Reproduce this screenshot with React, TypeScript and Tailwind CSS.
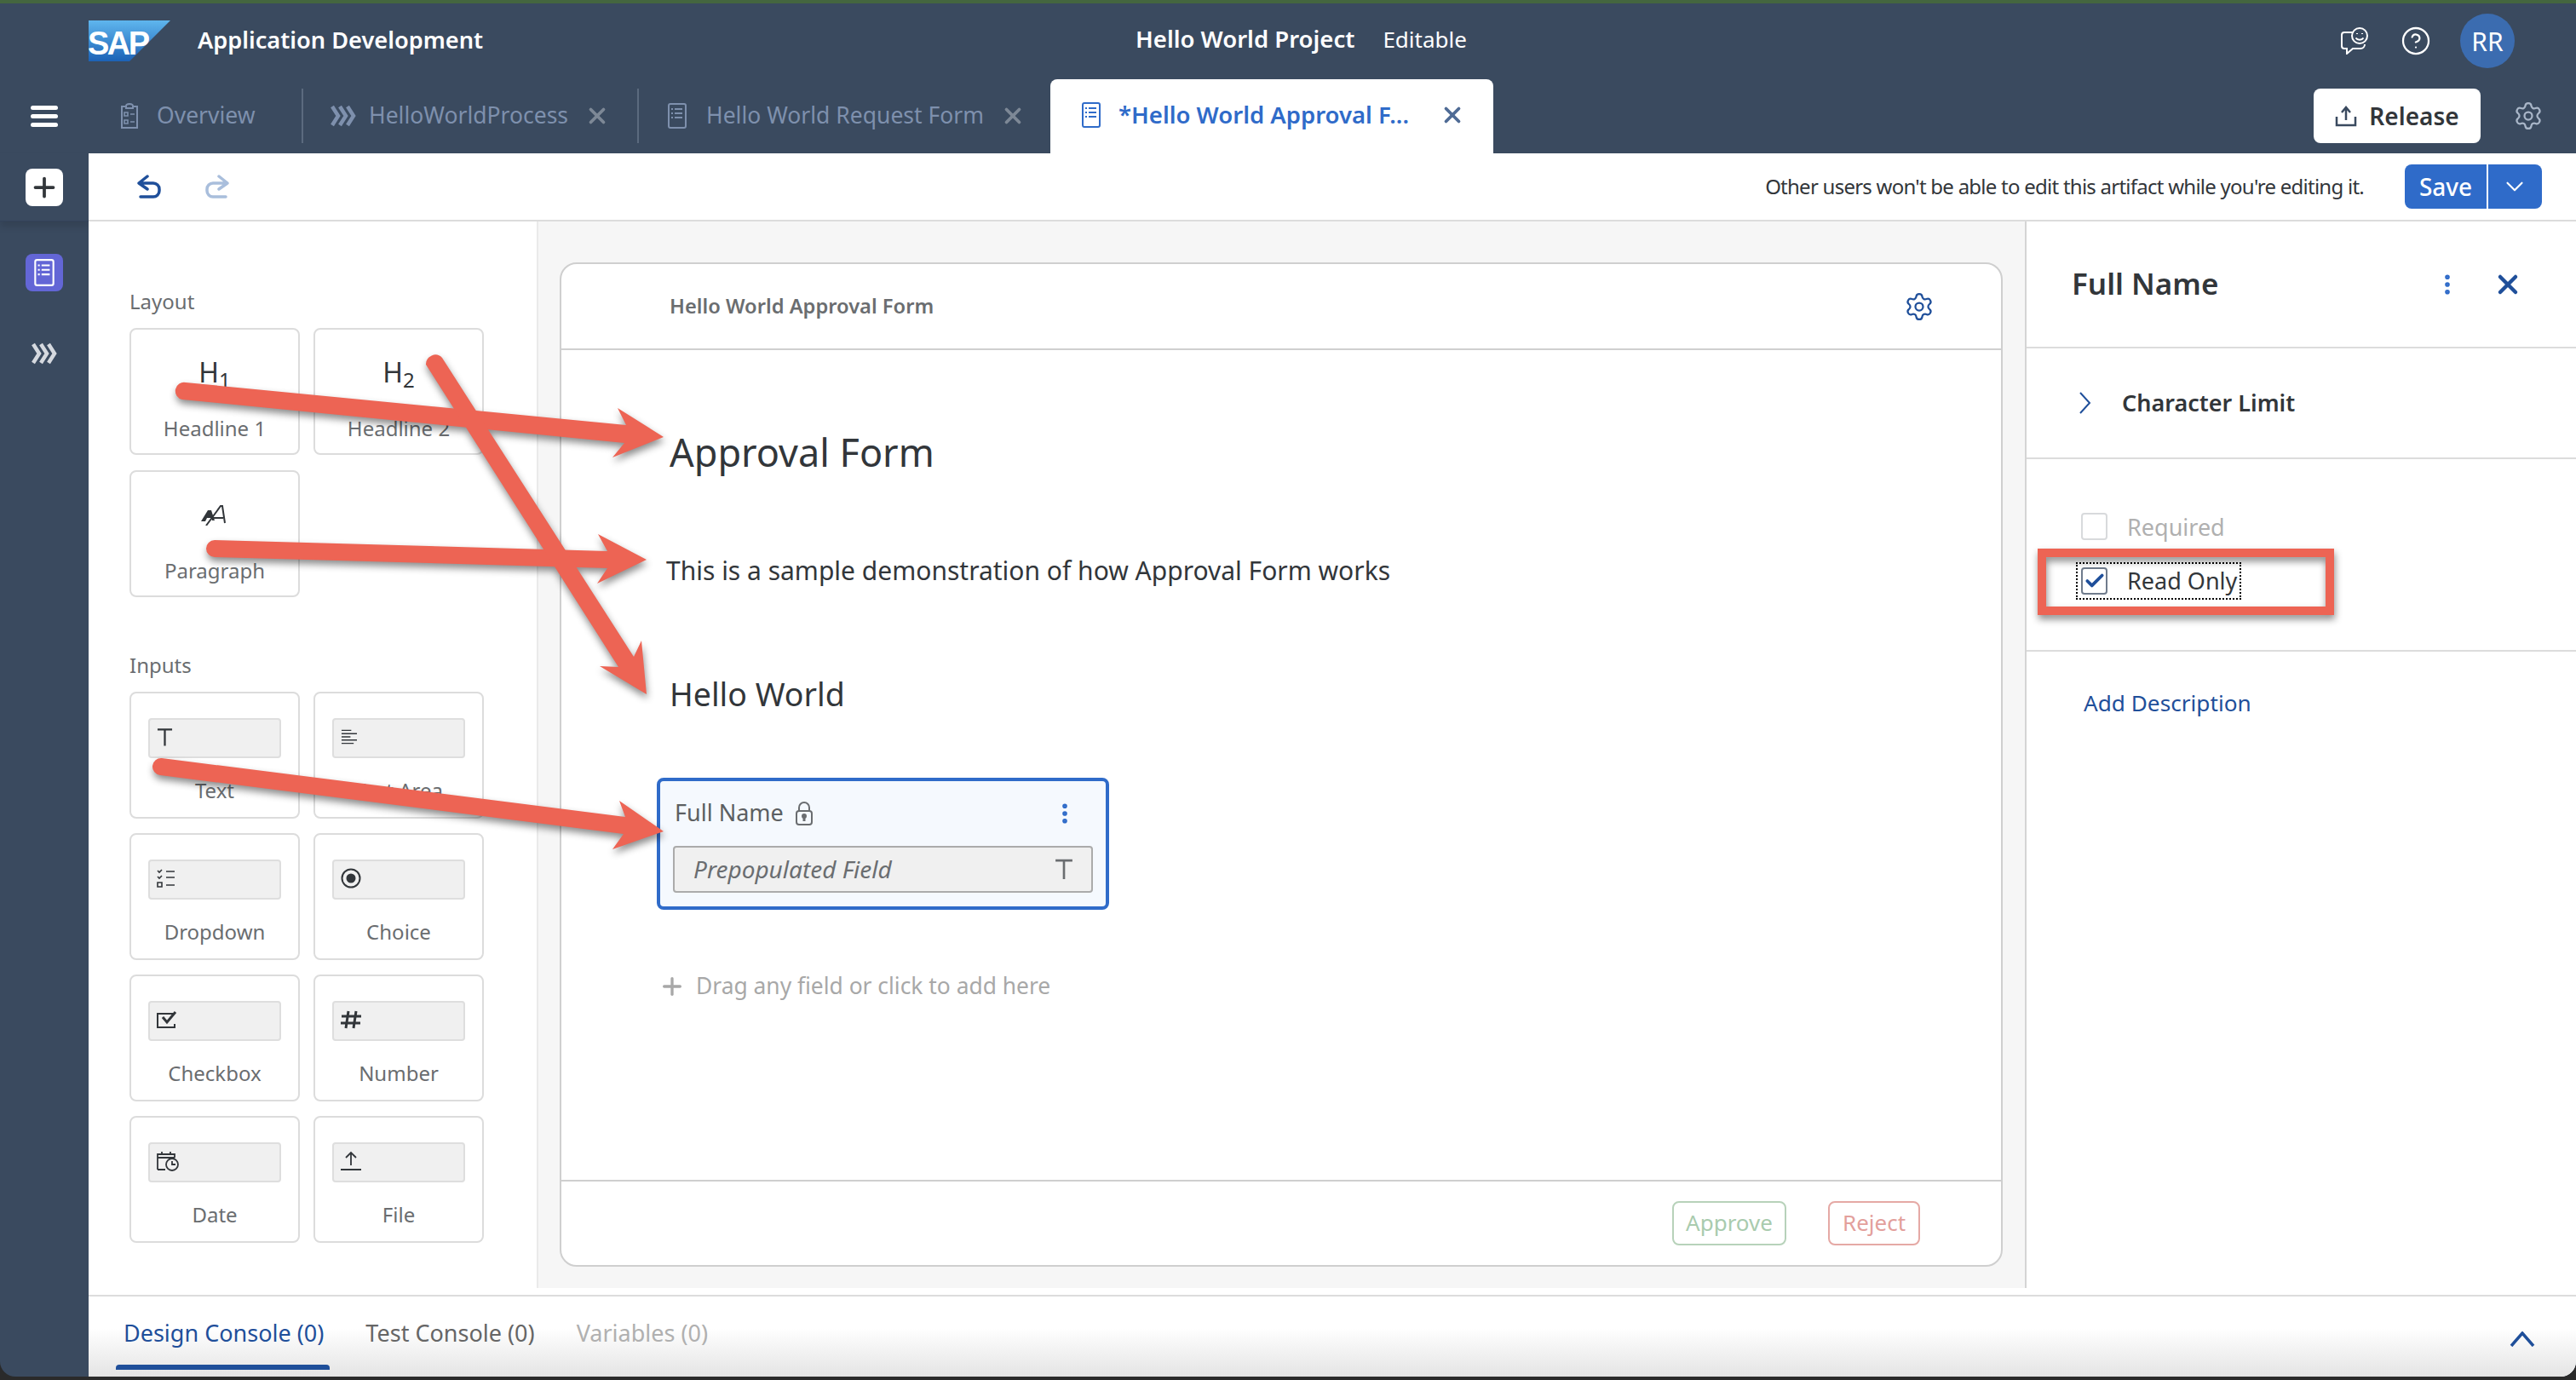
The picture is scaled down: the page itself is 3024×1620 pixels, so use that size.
import { Settings, X, EllipsisVertical, ChevronDown, Plus, CircleHelp, Check } from "lucide-react";

function ProcessIcon({ className }: { className: string }) {
  return (
    <svg viewBox="0 0 30 26" fill="none" stroke="currentColor" strokeWidth="4.5" className={className}>
      <path d="M2 2l7 11-7 11M11 2l7 11-7 11M20 2l7 11-7 11" />
    </svg>
  );
}

function FormIcon({ className }: { className: string }) {
  return (
    <svg viewBox="0 0 22 30" fill="none" stroke="currentColor" strokeWidth="2" className={className}>
      <rect x="1" y="1" width="20" height="28" rx="2" />
      <path d="M4 7h2M8 7h9M4 12h2M8 12h9M4 17h2M8 17h9" />
    </svg>
  );
}

function OverviewIcon({ className }: { className: string }) {
  return (
    <svg viewBox="0 0 22 30" fill="none" stroke="currentColor" strokeWidth="2" className={className}>
      <path d="M7 4H2v25h18V4h-5" />
      <path d="M7 6V3.5a4 2.5 0 0 1 8 0V6z" />
      <path d="M5 11h4v4H5zM5 20h4v4H5zM12 13h5M12 22h5" strokeWidth="1.6" />
    </svg>
  );
}

function FeedbackIcon({ className }: { className: string }) {
  return (
    <svg viewBox="0 0 32 32" fill="none" stroke="currentColor" strokeWidth="2" className={className}>
      <path d="M15 6H4a3 3 0 0 0-3 3v13a3 3 0 0 0 3 3h3v6l7-6h9a5 5 0 0 0 5-5" />
      <circle cx="22" cy="10" r="9" />
      <path d="M17.5 12.5c2 3 7 3 9 0M19 7v1M25 7v1" />
    </svg>
  );
}

function UploadIcon({ className }: { className: string }) {
  return (
    <svg viewBox="0 0 26 26" fill="none" stroke="currentColor" strokeWidth="2.5" className={className}>
      <path d="M13 18V3M8 9l5-6 5 6M2 14v10h22V14" />
    </svg>
  );
}

function UndoIcon({ className }: { className: string }) {
  return (
    <svg viewBox="0 0 30 28" fill="none" stroke="currentColor" strokeWidth="3.5" strokeLinecap="round" strokeLinejoin="round" className={className}>
      <path d="M13 2L3 10l10 7M3 10h17a7 7 0 0 1 7 7v2a7 7 0 0 1-7 7H5" />
    </svg>
  );
}

function LockIcon({ className }: { className: string }) {
  return (
    <svg viewBox="0 0 20 28" fill="none" stroke="currentColor" strokeWidth="2" className={className}>
      <rect x="1" y="11" width="18" height="16" rx="3" />
      <path d="M4 11V7a6 6 0 0 1 12 0v4" />
      <circle cx="10" cy="17" r="2" fill="currentColor" />
      <path d="M10 18v5" strokeWidth="3" />
    </svg>
  );
}

function TextIcon({ className }: { className: string }) {
  return (
    <svg viewBox="0 0 20 22" fill="none" stroke="currentColor" strokeWidth="2.4" className={className}>
      <path d="M1 2h18M10 2v20" />
    </svg>
  );
}

function ParagraphIcon({ className }: { className: string }) {
  return (
    <svg viewBox="0 0 32 24" className={className}>
      <path d="M8 6h4l4 12-3 0-1-3H7l-2 4H0z" fill="currentColor" />
      <path d="M6 24L23 1h2l3 20M14 15h12" fill="none" stroke="currentColor" strokeWidth="2" />
    </svg>
  );
}

function FieldGlyph({ kind }: { kind: string }) {
  const cls = "text-[#32363a] fill-none";
  if (kind === "text") return <TextIcon className="w-[19px] h-[22px] text-[#32363a]" />;
  if (kind === "area")
    return (
      <svg viewBox="0 0 20 20" stroke="currentColor" strokeWidth="1.5" className={`w-[19px] h-[20px] ${cls}`}>
        <path d="M1 2h12M1 6h19M1 10h11M1 14h19M1 18h15" />
      </svg>
    );
  if (kind === "dropdown")
    return (
      <svg viewBox="0 0 22 22" stroke="currentColor" strokeWidth="1.6" className={`w-[22px] h-[22px] ${cls}`}>
        <path d="M1 2l2 2 3-3M1 9l2 2 3-3M1 16h5v5H1zM11 3h10M11 10h10M11 19h10" />
      </svg>
    );
  if (kind === "choice")
    return (
      <svg viewBox="0 0 24 24" stroke="currentColor" strokeWidth="2" className={`w-[24px] h-[24px] ${cls}`}>
        <circle cx="12" cy="12" r="10.5" />
        <circle cx="12" cy="12" r="4.5" fill="currentColor" />
      </svg>
    );
  if (kind === "checkbox")
    return (
      <svg viewBox="0 0 24 22" stroke="currentColor" strokeWidth="2" className={`w-[24px] h-[22px] ${cls}`}>
        <path d="M20 4H1v16h20v-4" />
        <path d="M7 8l5 6 10-12" strokeWidth="3" />
      </svg>
    );
  if (kind === "number")
    return (
      <svg viewBox="0 0 24 22" stroke="currentColor" strokeWidth="3" className={`w-[24px] h-[22px] ${cls}`}>
        <path d="M9 1L6 21M18 1l-3 20M1 7h23M0 15h23" />
      </svg>
    );
  if (kind === "date")
    return (
      <svg viewBox="0 0 26 24" stroke="currentColor" strokeWidth="1.8" className={`w-[26px] h-[24px] ${cls}`}>
        <path d="M1 22V4h20v4M1 22h9M1 8h20M6 1v4M16 1v4" />
        <circle cx="18" cy="16" r="7" />
        <path d="M18 12v4h4" />
      </svg>
    );
  return (
    <svg viewBox="0 0 24 24" stroke="currentColor" strokeWidth="1.8" className={`w-[24px] h-[24px] ${cls}`}>
      <path d="M12 17V2M6 8l6-6 6 6M0 22h24" />
    </svg>
  );
}

function PaletteCard({ label, children }: { label: string; children: React.ReactNode }) {
  return (
    <div className="h-[149px] border-2 border-[#dcdcdc] rounded-lg flex flex-col items-center">
      <div className="h-[100px] w-full flex items-center justify-center">{children}</div>
      <div className="text-[24px] leading-[32px] text-[#6a6d70]">{label}</div>
    </div>
  );
}

function InputCard({ label, kind }: { label: string; kind: string }) {
  return (
    <div className="h-[149px] border-2 border-[#dcdcdc] rounded-lg flex flex-col items-center pt-[29px]">
      <div className="w-[156px] h-[47px] bg-[#f0f0f0] border-2 border-[#dedede] rounded flex items-center pl-[8px] pb-[4px]">
        <FieldGlyph kind={kind} />
      </div>
      <div className="mt-[22px] text-[24px] leading-[32px] text-[#6a6d70]">{label}</div>
    </div>
  );
}

export default function App() {
  return (
    <div className="relative w-[3024px] h-[1620px] overflow-hidden bg-[#2a2a2a] font-['Noto_Sans',sans-serif]">
      <div className="h-[1616px] rounded-b-[18px] overflow-hidden bg-[#3a4a5f] flex flex-col">
        <div className="h-[4px] bg-[#44663f]" />

        {/* Header */}
        <header className="h-[88px] flex items-start text-white">
          <div className="w-[1333px] pl-[104px] pt-[20px] flex items-center">
            <svg viewBox="0 0 96 48" className="w-[96px] h-[48px]">
              <defs>
                <linearGradient id="sapBlue" x1="0" y1="0" x2="0" y2="1">
                  <stop offset="0" stopColor="#5fb6ee" />
                  <stop offset="1" stopColor="#1c62b6" />
                </linearGradient>
              </defs>
              <polygon points="0,0 96,0 48,48 0,48" fill="url(#sapBlue)" />
              <text x="-1" y="40" fontFamily="Liberation Sans" fontWeight="700" fontSize="38" fill="#fff" letterSpacing="-2.5">
                SAP
              </text>
            </svg>
            <span className="ml-[32px] text-[27.2px] font-semibold leading-[44px] pb-[2px]">Application Development</span>
          </div>
          <div className="pt-[18px] flex items-center leading-[48px]">
            <span className="text-[27.5px] font-semibold">Hello World Project</span>
            <span className="ml-[33px] text-[26px]">Editable</span>
          </div>
          <div className="ml-auto pr-[72px] pt-[12px] flex items-center">
            <FeedbackIcon className="w-[32px] h-[32px]" />
            <CircleHelp strokeWidth={1.5} className="ml-[38px] w-[36px] h-[36px]" />
            <div className="ml-[34px] w-[64px] h-[64px] rounded-full bg-[#3b6cb0] flex items-center justify-center text-[30px]">RR</div>
          </div>
        </header>

        {/* Tab row */}
        <div className="h-[88px] flex items-center">
          <div className="w-[104px] flex flex-col items-center gap-[5px]">
            <div className="w-[32px] h-[5px] rounded bg-white" />
            <div className="w-[32px] h-[5px] rounded bg-white" />
            <div className="w-[32px] h-[5px] rounded bg-white" />
          </div>
          <div className="w-[252px] h-[64px] border-r-2 border-[#5b6a7e] pl-[37px] flex items-center text-[#7e90ad] text-[26.5px]">
            <OverviewIcon className="w-[22px] h-[30px]" />
            <span className="ml-[21px]">Overview</span>
          </div>
          <div className="w-[394px] h-[64px] border-r-2 border-[#5b6a7e] pl-[32px] flex items-center text-[#7e90ad] text-[26.5px]">
            <ProcessIcon className="w-[30px] h-[26px]" />
            <span className="ml-[15px]">HelloWorldProcess</span>
            <X strokeWidth={3} className="ml-[19px] w-[30px] h-[30px] text-[#7d8896]" />
          </div>
          <div className="w-[483px] h-[64px] pl-[34px] flex items-center text-[#7e90ad] text-[26.5px]">
            <FormIcon className="w-[22px] h-[30px]" />
            <span className="ml-[23px]">Hello World Request Form</span>
            <X strokeWidth={3} className="ml-[19px] w-[30px] h-[30px] text-[#7d8896]" />
          </div>
          <div className="w-[520px] h-[87px] self-end bg-white rounded-t-lg pl-[37px] pb-[3px] flex items-center text-[#2f6bc9] text-[27.5px] font-semibold">
            <FormIcon className="w-[22px] h-[30px]" />
            <span className="ml-[21px]">*Hello World Approval F...</span>
            <X strokeWidth={3} className="ml-[36px] w-[30px] h-[30px] text-[#4f6b95]" />
          </div>
          <div className="ml-auto flex items-center pr-[38px]">
            <div className="w-[196px] h-[64px] rounded-lg bg-white flex items-center justify-center text-[#32363a] text-[28px] font-semibold">
              <UploadIcon className="w-[26px] h-[26px] text-[#3a4a5f]" />
              <span className="ml-[14px]">Release</span>
            </div>
            <Settings strokeWidth={1.5} className="ml-[38px] w-[36px] h-[36px] text-[#a9b6c8]" />
          </div>
        </div>

        <div className="flex-1 flex min-h-0">
          {/* Left rail */}
          <aside className="w-[104px] flex flex-col items-center">
            <div className="w-full h-[80px] flex items-center justify-center border-b border-[#33425a] shadow-[0_6px_8px_rgba(0,0,0,0.12)]">
              <div className="w-[44px] h-[44px] rounded-lg bg-white flex items-center justify-center">
                <Plus strokeWidth={2.5} className="w-[36px] h-[36px] text-[#32363a]" />
              </div>
            </div>
            <div className="mt-[38px] w-[44px] h-[44px] rounded-lg bg-[#6366d6] flex items-center justify-center">
              <FormIcon className="w-[24px] h-[32px] text-white" />
            </div>
            <ProcessIcon className="mt-[60px] w-[34px] h-[26px] text-[#d5d9df]" />
          </aside>

          <div className="flex-1 flex flex-col bg-white">
            {/* Toolbar */}
            <div className="h-[80px] shrink-0 border-b-2 border-[#dcdcdc] flex items-center pl-[56px] pr-[40px]">
              <UndoIcon className="w-[30px] h-[28px] text-[#1f4f9a]" />
              <UndoIcon className="ml-[50px] w-[30px] h-[28px] text-[#a9bedc] -scale-x-100" />
              <span className="ml-auto text-[24px] text-[#32363a] tracking-[-0.75px]">Other users won't be able to edit this artifact while you're editing it.</span>
              <div className="ml-[48px] w-[161px] h-[52px] rounded-lg bg-[#2f6bc9] flex items-center text-white">
                <span className="w-[98px] text-center text-[28px] font-medium border-r-2 border-white leading-[52px]">Save</span>
                <ChevronDown strokeWidth={1.5} className="ml-[14px] w-[34px] h-[34px]" />
              </div>
            </div>

            <div className="h-[1252px] shrink-0 flex">
              {/* Palette */}
              <div className="w-[526px] pl-[48px] pt-[78px]">
                <div className="text-[24px] leading-[32px] text-[#6a6d70]">Layout</div>
                <div className="mt-[15px] grid grid-cols-[200px_200px] gap-x-[16px] gap-y-[18px]">
                  <PaletteCard label="Headline 1">
                    <span className="text-[32px] text-[#32363a] leading-none">H<sub>1</sub></span>
                  </PaletteCard>
                  <PaletteCard label="Headline 2">
                    <span className="text-[32px] text-[#32363a] leading-none">H<sub>2</sub></span>
                  </PaletteCard>
                  <PaletteCard label="Paragraph">
                    <ParagraphIcon className="w-[32px] h-[24px] mt-[2px] text-[#32363a]" />
                  </PaletteCard>
                </div>
                <div className="mt-[64px] text-[24px] leading-[32px] text-[#6a6d70]">Inputs</div>
                <div className="mt-[15px] grid grid-cols-[200px_200px] gap-x-[16px] gap-y-[17px]">
                  <InputCard label="Text" kind="text" />
                  <InputCard label="Text Area" kind="area" />
                  <InputCard label="Dropdown" kind="dropdown" />
                  <InputCard label="Choice" kind="choice" />
                  <InputCard label="Checkbox" kind="checkbox" />
                  <InputCard label="Number" kind="number" />
                  <InputCard label="Date" kind="date" />
                  <InputCard label="File" kind="file" />
                </div>
              </div>

              {/* Canvas */}
              <div className="w-[1747px] bg-[#f6f6f6] border-l-2 border-[#eaeaea] pt-[48px] pl-[25px] pr-[26px] pb-[25px]">
                <div className="h-full bg-white border-2 border-[#cfcfcf] rounded-[20px] flex flex-col">
                  <div className="h-[101px] shrink-0 border-b-2 border-[#cfcfcf] pl-[127px] pr-[78px] flex items-center justify-between">
                    <span className="text-[23.7px] font-semibold text-[#6a6d70]">Hello World Approval Form</span>
                    <Settings strokeWidth={1.5} className="w-[36px] h-[36px] text-[#1f4f9a]" />
                  </div>
                  <div className="flex-1 pl-[127px]">
                    <div className="mt-[90px] text-[45px] leading-[60px] text-[#32363a]">Approval Form</div>
                    <div className="mt-[89px] -ml-[4px] text-[30px] leading-[40px] text-[#32363a]">This is a sample demonstration of how Approval Form works</div>
                    <div className="mt-[100px] text-[37.5px] leading-[50px] text-[#32363a]">Hello World</div>
                    <div className="mt-[73px] -ml-[15px] w-[531px] h-[155px] bg-[#f5f9fe] border-4 border-[#2f6bc9] rounded-lg px-[15px]">
                      <div className="h-[76px] pb-[1px] flex items-center">
                        <span className="text-[27px] text-[#5c5f62] ml-[2px]">Full Name</span>
                        <LockIcon className="ml-[14px] w-[20px] h-[28px] text-[#6a6d70]" />
                        <EllipsisVertical strokeWidth={2.5} className="ml-auto mr-[18px] w-[30px] h-[30px] text-[#2f6bc9]" />
                      </div>
                      <div className="h-[55px] bg-[#f0f0f0] border-2 border-[#ababab] rounded flex items-center justify-between pl-[22px] pr-[21px] pb-[2px]">
                        <span className="text-[28px] italic text-[#6a6d70]">Prepopulated Field</span>
                        <TextIcon className="w-[22px] h-[26px] text-[#6a6d70]" />
                      </div>
                    </div>
                    <div className="mt-[70px] -ml-[13px] h-[40px] flex items-center text-[#a8a8a8]">
                      <Plus strokeWidth={2.5} className="w-[32px] h-[32px]" />
                      <span className="ml-[12px] text-[26.4px]">Drag any field or click to add here</span>
                    </div>
                  </div>
                  <div className="h-[100px] shrink-0 border-t-2 border-[#cfcfcf] flex items-center justify-end pr-[95px]">
                    <div className="w-[134px] h-[52px] border-2 border-[#b7d2ba] rounded-lg flex items-center justify-center pb-[2px] text-[26px] text-[#a9cbae]">Approve</div>
                    <div className="ml-[49px] w-[108px] h-[52px] border-2 border-[#e5a9a5] rounded-lg flex items-center justify-center pb-[2px] text-[26px] text-[#e3a09c]">Reject</div>
                  </div>
                </div>
              </div>

              {/* Properties */}
              <div className="flex-1 border-l-2 border-[#d4d4d4]">
                <div className="h-[149px] border-b-2 border-[#dcdcdc] pl-[53px] pr-[62px] flex items-center">
                  <span className="text-[35px] font-semibold text-[#32363a]">Full Name</span>
                  <EllipsisVertical strokeWidth={2.5} className="ml-auto w-[30px] h-[30px] text-[#2f6bc9]" />
                  <X strokeWidth={3} className="ml-[38px] w-[36px] h-[36px] text-[#1f4f9a]" />
                </div>
                <div className="h-[130px] border-b-2 border-[#dcdcdc] pl-[62px] flex items-center">
                  <svg viewBox="0 0 14 26" fill="none" stroke="currentColor" strokeWidth="2" className="w-[14px] h-[26px] text-[#1f4f9a]">
                    <path d="M1 1l11 12L1 25" />
                  </svg>
                  <span className="ml-[36px] text-[27px] font-semibold text-[#32363a]">Character Limit</span>
                </div>
                <div className="h-[226px] border-b-2 border-[#dcdcdc] pt-[63px] pl-[64px]">
                  <div className="flex items-center h-[32px]">
                    <div className="w-[31px] h-[32px] border-2 border-[#d8dadc] rounded" />
                    <span className="ml-[23px] pt-[2px] text-[27px] text-[#b0b0b0]">Required</span>
                  </div>
                  <div className="mt-[26px] -ml-[6px] w-[194px] h-[44px] border-2 border-dotted border-black flex items-center pl-[4px]">
                    <div className="w-[31px] h-[32px] border-2 border-[#6f7b8c] rounded flex items-center justify-center">
                      <Check strokeWidth={3.5} className="w-[26px] h-[26px] text-[#1f4f9a]" />
                    </div>
                    <span className="ml-[23px] text-[27px] text-[#32363a] whitespace-nowrap">Read Only</span>
                  </div>
                </div>
                <div className="pl-[67px] pt-[40px] text-[26.2px] leading-[40px] text-[#1f4f9a]">Add Description</div>
              </div>
            </div>

            {/* Console tabs */}
            <div className="mt-[8px] h-[2px] shrink-0 bg-[#dcdcdc]" />
            <div className="flex-1 relative flex items-start pl-[41px] bg-gradient-to-b from-white from-40% to-[#e4e4e4]">
              <div className="h-[88px] flex items-center pb-[2px] text-[27px] text-[#1f4f9a]">Design Console (0)</div>
              <div className="ml-[49px] h-[88px] flex items-center pb-[2px] text-[27px] text-[#666]">Test Console (0)</div>
              <div className="ml-[49px] h-[88px] flex items-center pb-[2px] text-[27px] text-[#b0b0b0]">Variables (0)</div>
              <svg viewBox="0 0 30 18" fill="none" stroke="currentColor" strokeWidth="3.5" className="absolute right-[48px] top-[41px] w-[30px] h-[18px] text-[#1f4f9a]">
                <path d="M2 17L15 2l13 15" />
              </svg>
              <div className="absolute left-[32px] bottom-[8px] w-[251px] h-[6px] rounded-t bg-[#1f4f9a]" />
            </div>
          </div>
        </div>
      </div>

      {/* Annotation overlay */}
      <svg viewBox="0 0 3024 1620" className="absolute inset-0 w-[3024px] h-[1620px] pointer-events-none drop-shadow-[1px_5px_4px_rgba(0,0,0,0.45)]">
        <g fill="#ed6454">
          <path d="M252 634L713 647L702 627L759 657L701 685L713 667L252 654A10 10 0 0 1 252 634Z" />
          <path d="M218 449L735 499L725 479L779 513L719 537L733 520L214 469A10 10 0 0 1 218 449Z" />
          <path d="M190 890L734 959L727 940L779 976L719 997L732 979L188 910A10 10 0 0 1 190 890Z" />
          <path d="M519 420L744 771L753 752L759 815L704 782L726 783L500 428A11 11 0 0 1 519 420Z" />
        </g>
        <rect x="2397" y="649" width="338" height="68" fill="none" stroke="#ed6454" strokeWidth="10" />
      </svg>
    </div>
  );
}
